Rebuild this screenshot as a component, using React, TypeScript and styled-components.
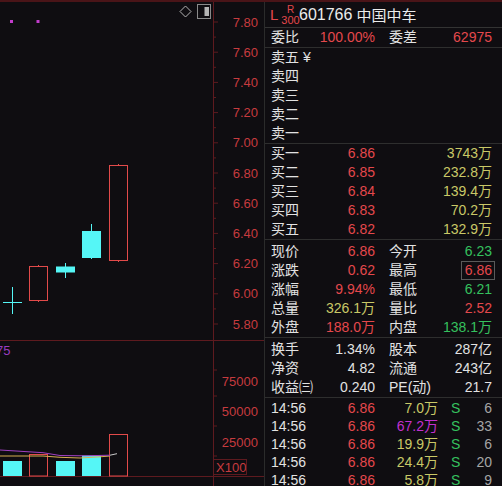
import React from "react";
import styled, { createGlobalStyle } from "styled-components";

const Global = createGlobalStyle`
  html, body { margin: 0; padding: 0; background: #0f0d11; }
  body { font-family: "Liberation Sans", "Noto Sans CJK SC", sans-serif; }
`;

const C = {
  label: "#e2e2e2",
  red: "#e4484c",
  yellow: "#c9c867",
  green: "#35c05e",
  purple: "#c231cf",
  grey: "#a5a5a5",
  axis: "#c73b3f",
  grid: "#5e1a1f",
  cyan: "#55f6f6",
  candleRed: "#e24a4a",
};

const Screen = styled.div`
  width: 502px;
  height: 486px;
  box-sizing: border-box;
  border-top: 2px solid #4a1418;
  background: #0f0d11;
  display: flex;
  overflow: hidden;
`;

const ChartArea = styled.div`
  position: relative;
  width: 264px;
  height: 484px;
  flex: none;
`;

const ToolBar = styled.div`
  position: absolute;
  top: 2px;
  left: 179px;
  display: flex;
  align-items: center;
  gap: 5px;
`;

const Panel = styled.div`
  flex: 1;
  border-left: 1px solid #2b2b2b;
  display: flex;
  flex-direction: column;
  overflow: hidden;
  font-size: 14px;
  color: ${C.label};
`;

const Section = styled.div<{ $pt?: number }>`
  flex: none;
  border-bottom: 1px solid #2e2e2e;
  padding-top: ${(p) => p.$pt ?? 0}px;
`;

const Header = styled.div`
  height: 25px;
  display: flex;
  align-items: center;
  padding-left: 5px;
  border-bottom: 1px solid #333;
  flex: none;
`;

const Mark = styled.span`
  color: ${C.red};
  font-size: 15px;
  width: 12px;
`;

const Stack = styled.span`
  display: flex;
  flex-direction: column;
  align-items: center;
  color: ${C.red};
  width: 17px;
  margin-top: 2px;
`;

const Tiny = styled.span<{ $size: number }>`
  font-size: ${(p) => p.$size}px;
  line-height: ${(p) => p.$size}px;
`;

const Code = styled.span`
  font-size: 16px;
  color: #ececec;
`;

const Name = styled.span`
  font-size: 15px;
  color: #ececec;
  margin-left: 4px;
`;

const Row = styled.div<{ $h?: number }>`
  height: ${(p) => p.$h ?? 19}px;
  line-height: ${(p) => p.$h ?? 19}px;
  padding: 0 10px 0 6px;
  white-space: nowrap;
`;

const PairRow = styled(Row)`
  display: grid;
  grid-template-columns: 104px 103px;
  column-gap: 14px;
`;

const BookRow = styled(Row)`
  display: grid;
  grid-template-columns: 104px 1fr;
`;

const TradeRow = styled(Row)`
  display: grid;
  grid-template-columns: 104px 63px 1fr;
`;

const Cell = styled.div<{ $pl?: number }>`
  display: flex;
  justify-content: space-between;
  padding-left: ${(p) => p.$pl ?? 0}px;
`;

const Val = styled.span<{ $c?: string }>`
  color: ${(p) => p.$c ?? C.label};
  text-align: right;
`;

const Boxed = styled(Val)`
  display: inline-block;
  box-sizing: border-box;
  height: 19px;
  line-height: 17px;
  border: 1px solid #5a5a5a;
  padding: 0 2px 0 3px;
  margin-right: -3px;
`;

const Right = styled.span<{ $c?: string }>`
  color: ${(p) => p.$c ?? C.label};
  text-align: right;
`;

const prices = ["7.80", "7.60", "7.40", "7.20", "7.00", "6.80", "6.60", "6.40", "6.20", "6.00", "5.80"];

function Chart() {
  const ticks = [];
  for (let i = 0; i <= 20; i++) {
    const y = 22 + i * 15.1;
    ticks.push(<line key={"t" + i} x1={213} x2={i % 2 === 0 ? 218 : 216} y1={y} y2={y} stroke={C.grid} strokeWidth={1} />);
  }
  return (
    <svg width={264} height={484} viewBox="0 2 264 484" style={{ display: "block" }}>
      <line x1={213.5} x2={213.5} y1={2} y2={486} stroke={C.grid} />
      <line x1={0} x2={264} y1={340.5} y2={340.5} stroke={C.grid} />
      <line x1={0} x2={264} y1={476.5} y2={476.5} stroke={C.grid} />
      {ticks}
      {[370, 396, 426, 456].map((y) => (
        <line key={"v" + y} x1={213} x2={217} y1={y} y2={y} stroke={C.grid} />
      ))}
      <g fontFamily="Liberation Sans, sans-serif" fontSize={13} fill={C.axis} textAnchor="end">
        {prices.map((p, i) => (
          <text key={p} x={258} y={22 + i * 30.2 + 4.6}>
            {p}
          </text>
        ))}
        <text x={258} y={385.6}>75000</text>
        <text x={258} y={416}>50000</text>
        <text x={258} y={446.6}>25000</text>
        <text x={216} y={471.6} textAnchor="start">X100</text>
      </g>
      <rect x={213.5} y={459.5} width={33} height={15} fill="none" stroke={C.grid} />
      <text x={-4} y={354.6} fontFamily="Liberation Sans, sans-serif" fontSize={13} fill="#9a3cc0">
        75
      </text>

      <rect x={10} y={20} width={3} height={3} fill="#c23ccc" />
      <rect x={36.5} y={20} width={3} height={3} fill="#c23ccc" />

      {/* candles */}
      <line x1={3} x2={22} y1={302.5} y2={302.5} stroke={C.cyan} />
      <line x1={12.5} x2={12.5} y1={287} y2={314} stroke={C.cyan} />

      <line x1={38.5} x2={38.5} y1={265} y2={302} stroke={C.candleRed} />
      <rect x={29.5} y={266.5} width={18} height={34} fill="#0f0d11" stroke={C.candleRed} />

      <line x1={65.5} x2={65.5} y1={263} y2={278} stroke={C.cyan} />
      <rect x={56} y={266.5} width={19} height={6} fill={C.cyan} />

      <line x1={91.5} x2={91.5} y1={224} y2={259} stroke={C.cyan} />
      <rect x={82} y={231} width={19} height={27} fill={C.cyan} />

      <line x1={118.5} x2={118.5} y1={164} y2={262} stroke={C.candleRed} />
      <rect x={109.5} y={165.5} width={18} height={95} fill="#0f0d11" stroke={C.candleRed} />

      {/* volume */}
      <rect x={3} y={461} width={19} height={15} fill={C.cyan} />
      <rect x={29.5} y={454.5} width={18} height={21.5} fill="none" stroke={C.candleRed} />
      <rect x={56} y={461} width={19} height={15} fill={C.cyan} />
      <rect x={82} y={455.5} width={19} height={20.5} fill={C.cyan} />
      <rect x={109.5} y={434.5} width={18} height={41.5} fill="none" stroke={C.candleRed} />

      <polyline
        points="0,456 43,456 60,457.3 80,458 100,456.8 110,456"
        fill="none"
        stroke="#d8b050"
        strokeWidth={1}
      />
      <polyline
        points="0,450 43,452.7 60,455.5 85,455.8 110,455.2"
        fill="none"
        stroke="#a040c0"
        strokeWidth={1}
      />
      <polyline points="110,455.2 117,453.7" fill="none" stroke="#c8c8c8" strokeWidth={1} />
    </svg>
  );
}

const sells = ["卖五 ¥", "卖四", "卖三", "卖二", "卖一"];
const buys = [
  ["买一", "6.86", "3743万"],
  ["买二", "6.85", "232.8万"],
  ["买三", "6.84", "139.4万"],
  ["买四", "6.83", "70.2万"],
  ["买五", "6.82", "132.9万"],
];
const trades: [string, string, string, string, string][] = [
  ["14:56", "6.86", "7.0万", C.yellow, "6"],
  ["14:56", "6.86", "67.2万", C.purple, "33"],
  ["14:56", "6.86", "19.9万", C.yellow, "6"],
  ["14:56", "6.86", "24.4万", C.yellow, "20"],
  ["14:56", "6.86", "5.8万", C.yellow, "9"],
];

export default function App() {
  return (
    <>
      <Global />
      <Screen>
        <ChartArea>
          <Chart />
          <ToolBar>
            <svg width={13} height={13} viewBox="0 0 13 13">
              <polygon points="6.5,1 12,6.5 6.5,12 1,6.5" fill="none" stroke="#b4b4b4" strokeWidth={1} />
            </svg>
            <svg width={14} height={15} viewBox="0 0 14 15">
              <rect x={0.5} y={0.5} width={13} height={14} fill="none" stroke="#8a8a8a" />
              <rect x={7.5} y={3} width={4.5} height={9} fill="#b5b5b5" />
            </svg>
          </ToolBar>
        </ChartArea>
        <Panel>
          <Header>
            <Mark>L</Mark>
            <Stack>
              <Tiny $size={10}>R</Tiny>
              <Tiny $size={11}>300</Tiny>
            </Stack>
            <Code>601766</Code>
            <Name>中国中车</Name>
          </Header>
          <Section>
            <PairRow>
              <Cell>
                <span>委比</span>
                <Val $c={C.red}>100.00%</Val>
              </Cell>
              <Cell>
                <span>委差</span>
                <Val $c={C.red}>62975</Val>
              </Cell>
            </PairRow>
          </Section>
          <Section>
            {sells.map((s) => (
              <Row key={s}>{s}</Row>
            ))}
          </Section>
          <Section>
            {buys.map(([l, p, v]) => (
              <BookRow key={l}>
                <Cell>
                  <span>{l}</span>
                  <Val $c={C.red}>{p}</Val>
                </Cell>
                <Right $c={C.yellow}>{v}</Right>
              </BookRow>
            ))}
          </Section>
          <Section $pt={2}>
            <PairRow>
              <Cell>
                <span>现价</span>
                <Val $c={C.red}>6.86</Val>
              </Cell>
              <Cell>
                <span>今开</span>
                <Val $c={C.green}>6.23</Val>
              </Cell>
            </PairRow>
            <PairRow>
              <Cell>
                <span>涨跌</span>
                <Val $c={C.red}>0.62</Val>
              </Cell>
              <Cell>
                <span>最高</span>
                <Boxed $c={C.red}>6.86</Boxed>
              </Cell>
            </PairRow>
            <PairRow>
              <Cell>
                <span>涨幅</span>
                <Val $c={C.red}>9.94%</Val>
              </Cell>
              <Cell>
                <span>最低</span>
                <Val $c={C.green}>6.21</Val>
              </Cell>
            </PairRow>
            <PairRow>
              <Cell>
                <span>总量</span>
                <Val $c={C.yellow}>326.1万</Val>
              </Cell>
              <Cell>
                <span>量比</span>
                <Val $c={C.red}>2.52</Val>
              </Cell>
            </PairRow>
            <PairRow>
              <Cell>
                <span>外盘</span>
                <Val $c={C.red}>188.0万</Val>
              </Cell>
              <Cell>
                <span>内盘</span>
                <Val $c={C.green}>138.1万</Val>
              </Cell>
            </PairRow>
          </Section>
          <Section $pt={2}>
            <PairRow>
              <Cell>
                <span>换手</span>
                <Val>1.34%</Val>
              </Cell>
              <Cell>
                <span>股本</span>
                <Val>287亿</Val>
              </Cell>
            </PairRow>
            <PairRow>
              <Cell>
                <span>净资</span>
                <Val>4.82</Val>
              </Cell>
              <Cell>
                <span>流通</span>
                <Val>243亿</Val>
              </Cell>
            </PairRow>
            <PairRow>
              <Cell>
                <span>收益㈢</span>
                <Val>0.240</Val>
              </Cell>
              <Cell>
                <span>PE(动)</span>
                <Val>21.7</Val>
              </Cell>
            </PairRow>
          </Section>
          <div style={{ paddingTop: 1 }}>
            {trades.map(([t, p, v, vc, n], i) => (
              <TradeRow key={i} $h={18}>
                <Cell>
                  <span>{t}</span>
                  <Val $c={C.red}>{p}</Val>
                </Cell>
                <Right $c={vc}>{v}</Right>
                <Cell $pl={13}>
                  <Val $c={C.green}>S</Val>
                  <Val $c={C.grey}>{n}</Val>
                </Cell>
              </TradeRow>
            ))}
          </div>
        </Panel>
      </Screen>
    </>
  );
}
